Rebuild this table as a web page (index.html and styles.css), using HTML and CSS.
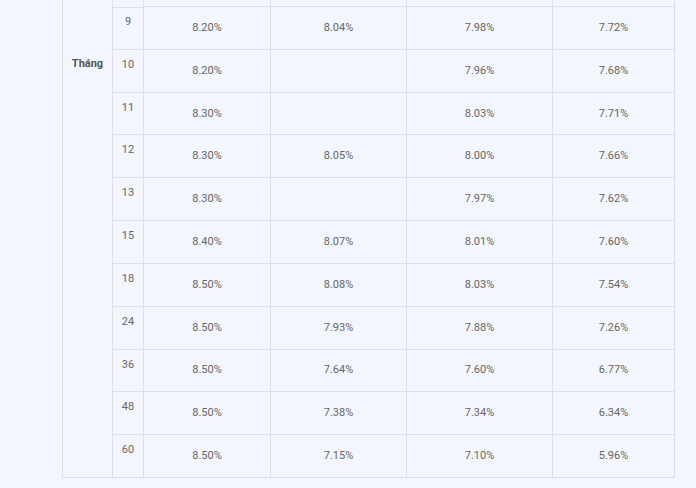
FILE: index.html
```html
<!DOCTYPE html>
<html lang="vi">
<head>
<meta charset="utf-8">
<title>Lãi suất</title>
<link rel="stylesheet" href="styles.css">
</head>
<body>
<div class="table">
  <div class="cell label">Tháng</div>
  <div class="cell term"></div><div class="cell val"></div><div class="cell val"></div><div class="cell val"></div><div class="cell val"></div>

  <div class="cell term">9</div><div class="cell val">8.20%</div><div class="cell val">8.04%</div><div class="cell val">7.98%</div><div class="cell val">7.72%</div>
  <div class="cell term">10</div><div class="cell val">8.20%</div><div class="cell val"></div><div class="cell val">7.96%</div><div class="cell val">7.68%</div>
  <div class="cell term">11</div><div class="cell val">8.30%</div><div class="cell val"></div><div class="cell val">8.03%</div><div class="cell val">7.71%</div>
  <div class="cell term">12</div><div class="cell val">8.30%</div><div class="cell val">8.05%</div><div class="cell val">8.00%</div><div class="cell val">7.66%</div>
  <div class="cell term">13</div><div class="cell val">8.30%</div><div class="cell val"></div><div class="cell val">7.97%</div><div class="cell val">7.62%</div>
  <div class="cell term">15</div><div class="cell val">8.40%</div><div class="cell val">8.07%</div><div class="cell val">8.01%</div><div class="cell val">7.60%</div>
  <div class="cell term">18</div><div class="cell val">8.50%</div><div class="cell val">8.08%</div><div class="cell val">8.03%</div><div class="cell val">7.54%</div>
  <div class="cell term">24</div><div class="cell val">8.50%</div><div class="cell val">7.93%</div><div class="cell val">7.88%</div><div class="cell val">7.26%</div>
  <div class="cell term">36</div><div class="cell val">8.50%</div><div class="cell val">7.64%</div><div class="cell val">7.60%</div><div class="cell val">6.77%</div>
  <div class="cell term">48</div><div class="cell val">8.50%</div><div class="cell val">7.38%</div><div class="cell val">7.34%</div><div class="cell val">6.34%</div>
  <div class="cell term">60</div><div class="cell val">8.50%</div><div class="cell val">7.15%</div><div class="cell val">7.10%</div><div class="cell val">5.96%</div>
</div>
</body>
</html>
```
FILE: styles.css
```css
html, body {
  margin: 0;
  padding: 0;
  background: #f3f6fc;
}
body {
  font-family: Roboto, "Liberation Sans", sans-serif;
  font-size: 11px;
  line-height: 16px;
  color: #666;
}
.table {
  display: grid;
  grid-template-columns: 50px 31px 127px 136px 146px 122px;
  grid-template-rows: 7px repeat(11, 42.82px);
  margin-left: 62px;
  width: max-content;
  border-left: 1px solid #dcdfe6;
}
.cell {
  box-sizing: border-box;
  border-right: 1px solid #dcdfe6;
  border-bottom: 1px solid #dcdfe6;
  overflow: hidden;
}
.label {
  grid-column: 1;
  grid-row: 1 / span 12;
  text-align: center;
  font-weight: 700;
  color: #555;
  padding-top: 56px;
}
.term {
  text-align: center;
  padding-top: 7px;
}
.val {
  display: flex;
  align-items: center;
  justify-content: center;
}
```
